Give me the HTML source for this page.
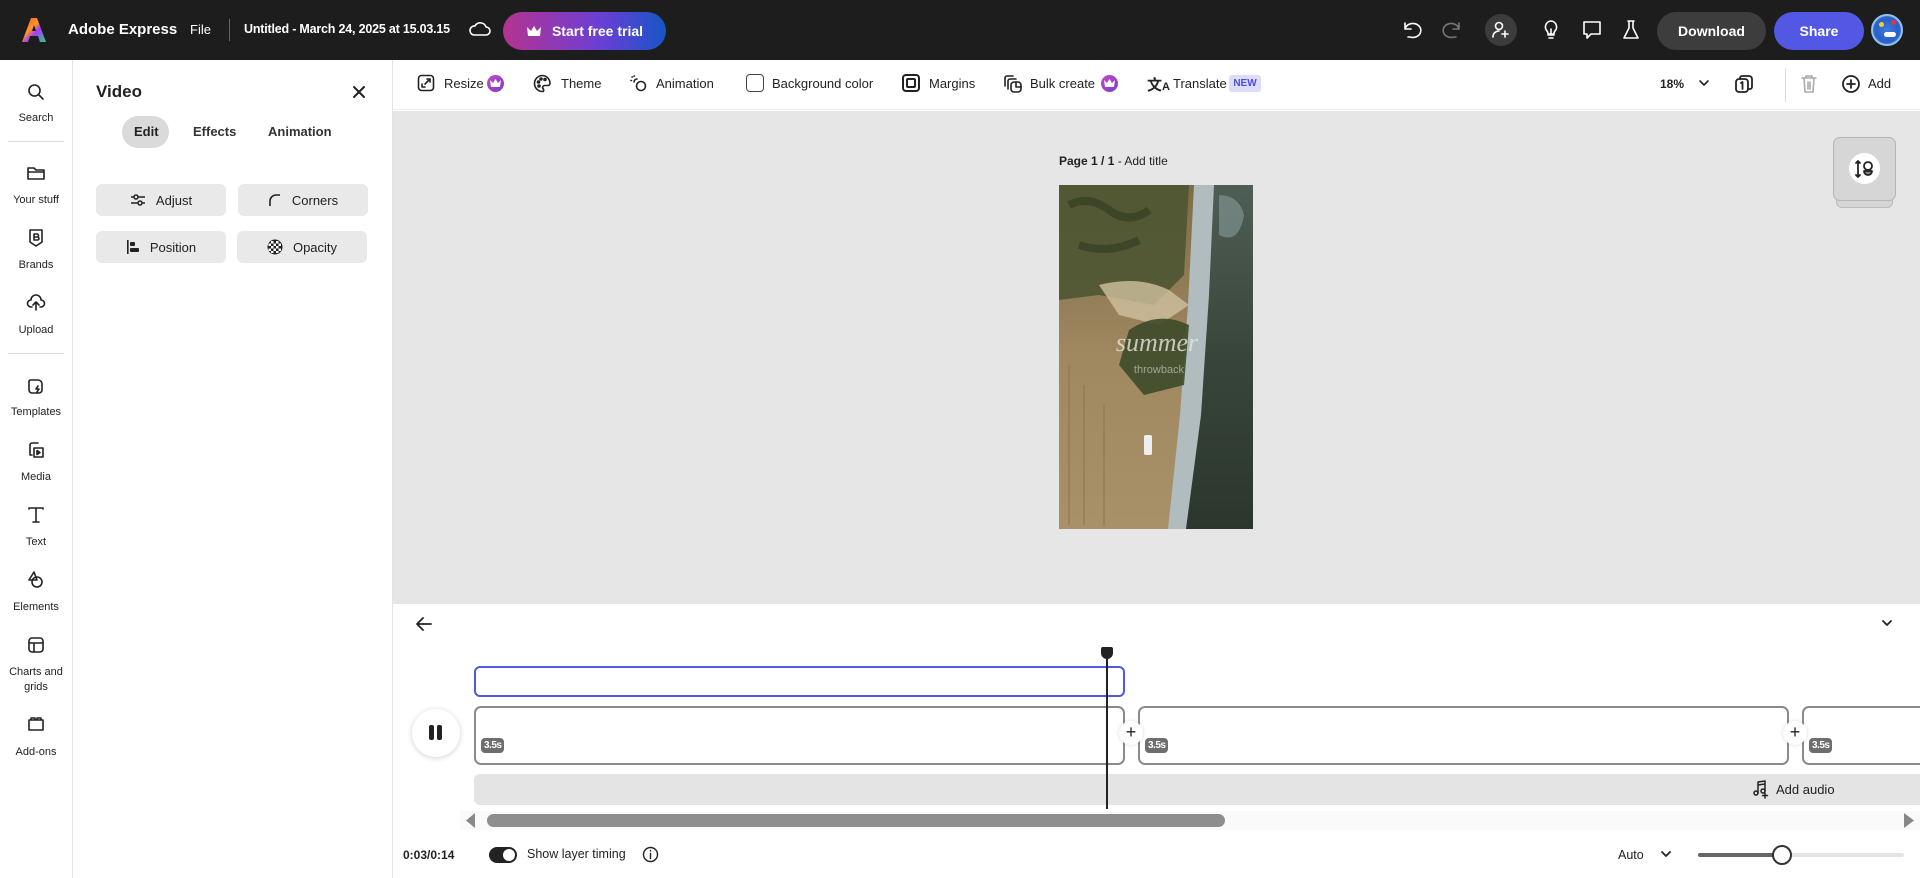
<!DOCTYPE html>
<html><head><meta charset="utf-8"><style>
*{box-sizing:border-box;margin:0;padding:0}
body{width:1920px;height:878px;overflow:hidden;font-family:"Liberation Sans",sans-serif;background:#fff;color:#222;position:relative}
.a{position:absolute}
.hdr{left:0;top:0;width:1920px;height:60px;background:#1d1d1d;color:#fff}
.t{font-size:13px;white-space:nowrap}
.ic{position:absolute;fill:none;stroke:#222;stroke-width:1.6;stroke-linecap:round;stroke-linejoin:round}
.w{stroke:#fff}
.rl{position:absolute;width:72px;text-align:center;font-size:11px;color:#222}
.btn{position:absolute;background:#e9e9e9;border-radius:6px;height:32px;font-size:13px;display:flex;align-items:center;justify-content:center;gap:10px}
.tb{position:absolute;top:76px;font-size:13px;color:#222;white-space:nowrap}
.badge{position:absolute;background:#6e6e6e;color:#fff;font-size:10px;border-radius:4px;padding:2px 3px;font-weight:bold;letter-spacing:-.5px}
.plus{position:absolute;width:24px;height:24px;border-radius:12px;background:#fff;font-size:18px;text-align:center;line-height:23px;box-shadow:0 0 4px rgba(0,0,0,.15)}
</style></head><body>
<div class="a hdr">
 <svg class="a" style="left:22px;top:17px" width="24" height="26" viewBox="0 0 24 26"><defs><linearGradient id="lg" x1="0" y1="0" x2="1" y2="1"><stop offset="0" stop-color="#ff3d3d"/><stop offset=".4" stop-color="#ff9a1f"/><stop offset=".6" stop-color="#a23bff"/><stop offset="1" stop-color="#2ed07a"/></linearGradient></defs><path d="M9 1h6l9 24h-6l-2-6h-8l-2 6H0z M10 14h4l-2-6z" fill="url(#lg)" fill-rule="evenodd"/></svg>
 <div class="a" style="left:68px;top:21px;font-size:15px;font-weight:bold">Adobe Express</div>
 <div class="a t" style="left:190px;top:22px">File</div>
 <div class="a" style="left:229px;top:19px;width:1px;height:22px;background:#666"></div>
 <div class="a t" style="left:244px;top:22px;font-weight:bold;font-size:12.5px;letter-spacing:-.2px">Untitled - March 24, 2025 at 15.03.15</div>
 <svg class="ic w" style="left:469px;top:19px" width="22" height="20" viewBox="0 0 22 20"><path d="M5 16h12a4 4 0 0 0 0-8 6 6 0 0 0-11-1 4.5 4.5 0 0 0-1 9z"/></svg>
 <div class="a" style="left:503px;top:12px;width:163px;height:38px;border-radius:19px;background:linear-gradient(90deg,#b5338f,#6a3fd6 60%,#1656c4);font-weight:bold;font-size:14px;display:flex;align-items:center;justify-content:center;gap:10px"><svg width="16" height="12" viewBox="0 0 16 12"><path d="M1 2l4 4 3-5 3 5 4-4-1 9H2z" fill="#fff"/></svg>Start free trial</div>
 <svg class="ic w" style="left:1401px;top:19px" width="22" height="22" viewBox="0 0 22 22"><path d="M4 4v6h6M4 10a8 7 0 1 1 5 8h-2"/></svg>
 <svg class="ic" style="left:1441px;top:19px;stroke:#777" width="22" height="22" viewBox="0 0 22 22"><path d="M18 4v6h-6M18 10a8 7 0 1 0-5 8h2"/></svg>
 <div class="a" style="left:1485px;top:14px;width:32px;height:32px;border-radius:16px;background:#3c3c3c"></div>
 <svg class="ic w" style="left:1491px;top:20px" width="20" height="20" viewBox="0 0 20 20"><circle cx="8" cy="6" r="3.5"/><path d="M2 17c0-4 3-6 6-6M14 11v6M11 14h6"/></svg>
 <svg class="ic w" style="left:1541px;top:19px" width="20" height="22" viewBox="0 0 20 22"><path d="M7 16h6M8 19h4M10 2a6 6 0 0 0-4 10c1 1 1 2 1 3h6c0-1 0-2 1-3a6 6 0 0 0-4-10zM10 15v-5"/></svg>
 <svg class="ic w" style="left:1581px;top:19px" width="22" height="22" viewBox="0 0 22 22"><path d="M3 3h16v12H10l-4 4v-4H3z"/></svg>
 <svg class="ic w" style="left:1621px;top:19px" width="20" height="22" viewBox="0 0 20 22"><path d="M7 2h6M8 2v7l-5 10h14L12 9V2"/></svg>
 <div class="a" style="left:1657px;top:12px;width:109px;height:38px;border-radius:19px;background:#3d3d3d;font-weight:bold;font-size:14px;text-align:center;line-height:38px">Download</div>
 <div class="a" style="left:1774px;top:12px;width:90px;height:38px;border-radius:19px;background:#5258e4;font-weight:bold;font-size:14px;text-align:center;line-height:38px">Share</div>
 <div class="a" style="left:1871px;top:14px;width:32px;height:32px;border-radius:16px;background:radial-gradient(circle at 50% 50%,#3a7be0,#2a5dc8 60%,#9ad 100%);border:2px solid #8bc4f0"></div>
 <div class="a" style="left:1879px;top:22px;width:5px;height:5px;border-radius:3px;background:#f5d020"></div>
 <div class="a" style="left:1891px;top:20px;width:5px;height:5px;border-radius:3px;background:#e33"></div>
 <div class="a" style="left:1884px;top:32px;width:12px;height:5px;border-radius:3px;background:#fff"></div>
</div>

<div class="a" style="left:72px;top:60px;width:1px;height:818px;background:#e4e4e4"></div>
<svg class="ic" style="left:26px;top:82px" width="20" height="20" viewBox="0 0 20 20"><circle cx="8.5" cy="8.5" r="5.5"/><path d="M13 13l4 4"/></svg>
<div class="rl" style="top:112px">Search</div>
<div class="a" style="left:8px;top:141px;width:56px;height:1px;background:#ddd"></div>
<svg class="ic" style="left:26px;top:164px" width="20" height="18" viewBox="0 0 20 18"><path d="M2 4h6l2 2h8v9H2zM2 8h16"/></svg>
<div class="rl" style="top:194px">Your stuff</div>
<svg class="ic" style="left:27px;top:228px" width="18" height="20" viewBox="0 0 18 20"><path d="M3 2h12v12l-6 4-6-4z"/><path d="M7 6h3a1.5 1.5 0 0 1 0 3H7zM7 9h3.5a1.5 1.5 0 0 1 0 3H7z"/></svg>
<div class="rl" style="top:259px">Brands</div>
<svg class="ic" style="left:26px;top:292px" width="20" height="20" viewBox="0 0 20 20"><path d="M6 15H5a3.5 3.5 0 0 1 0-7 5 5 0 0 1 10 0 3.5 3.5 0 0 1 0 7h-1M10 18v-8M7 13l3-3 3 3"/></svg>
<div class="rl" style="top:324px">Upload</div>
<div class="a" style="left:8px;top:353px;width:56px;height:1px;background:#ddd"></div>
<svg class="ic" style="left:26px;top:376px" width="20" height="20" viewBox="0 0 20 20"><path d="M4 4h8a4 4 0 0 1 4 4v6a3 3 0 0 1-3 3H6a3 3 0 0 1-3-3V5zM12 10l-2 3h3l-2 3"/></svg>
<div class="rl" style="top:406px">Templates</div>
<svg class="ic" style="left:26px;top:440px" width="20" height="20" viewBox="0 0 20 20"><path d="M6 15H4V5a2 2 0 0 1 2-2h6M8 8h9v9H8z"/><path d="M11 10.5l3 2-3 2z" fill="#222"/></svg>
<div class="rl" style="top:471px">Media</div>
<svg class="ic" style="left:26px;top:505px" width="20" height="20" viewBox="0 0 20 20"><path d="M3 4V3h14v1M10 3v14M7 17h6"/></svg>
<div class="rl" style="top:536px">Text</div>
<svg class="ic" style="left:26px;top:570px" width="20" height="20" viewBox="0 0 20 20"><path d="M8 2l-5 8h8z"/><circle cx="11" cy="12" r="5"/></svg>
<div class="rl" style="top:601px">Elements</div>
<svg class="ic" style="left:26px;top:635px" width="20" height="20" viewBox="0 0 20 20"><rect x="3" y="3" width="14" height="14" rx="3"/><path d="M3 8h14M8 8v9"/></svg>
<div class="rl" style="top:665px;line-height:15px">Charts and<br>grids</div>
<svg class="ic" style="left:26px;top:715px" width="20" height="18" viewBox="0 0 20 18"><path d="M3 5h14v10H3zM5 5V3h4v2M11 5V3h4v2"/></svg>
<div class="rl" style="top:746px">Add-ons</div>

<div class="a" style="left:392px;top:60px;width:1px;height:818px;background:#e4e4e4"></div>
<div class="a" style="left:96px;top:82px;font-size:17px;font-weight:bold">Video</div>
<svg class="ic" style="left:351px;top:84px;stroke-width:2" width="16" height="16" viewBox="0 0 16 16"><path d="M3 3l10 10M13 3L3 13"/></svg>
<div class="a" style="left:122px;top:116px;width:47px;height:32px;border-radius:16px;background:#dadada"></div>
<div class="a t" style="left:134px;top:124px;font-weight:bold">Edit</div>
<div class="a t" style="left:193px;top:124px;font-weight:bold;color:#333">Effects</div>
<div class="a t" style="left:268px;top:124px;font-weight:bold;color:#333">Animation</div>
<div class="btn" style="left:96px;top:184px;width:130px"><svg width="16" height="14" viewBox="0 0 16 14" fill="none" stroke="#222" stroke-width="1.5"><path d="M1 4h14M1 10h14"/><circle cx="6" cy="4" r="2" fill="#e9e9e9"/><circle cx="10" cy="10" r="2" fill="#e9e9e9"/></svg>Adjust</div>
<div class="btn" style="left:238px;top:184px;width:130px"><svg width="14" height="14" viewBox="0 0 14 14" fill="none" stroke="#222" stroke-width="1.6"><path d="M2 13V8a6 6 0 0 1 6-6h4"/></svg>Corners</div>
<div class="btn" style="left:96px;top:231px;width:130px"><svg width="14" height="14" viewBox="0 0 14 14"><rect x="1" y="0" width="1.6" height="14" fill="#222"/><rect x="4" y="2" width="5" height="4" rx="1" fill="#222"/><rect x="4" y="8" width="9" height="4" rx="1" fill="#222"/></svg>Position</div>
<div class="btn" style="left:237px;top:231px;width:130px"><svg width="16" height="16" viewBox="0 0 16 16"><circle cx="8" cy="8" r="7.5" fill="#222"/><g fill="#fff"><rect x="4" y="2" width="2.5" height="2.5"/><rect x="9" y="2" width="2.5" height="2.5"/><rect x="6.5" y="4.5" width="2.5" height="2.5"/><rect x="11.5" y="4.5" width="2.5" height="2.5"/><rect x="1.5" y="4.5" width="2.5" height="2.5"/><rect x="4" y="7" width="2.5" height="2.5"/><rect x="9" y="7" width="2.5" height="2.5"/><rect x="6.5" y="9.5" width="2.5" height="2.5"/><rect x="1.5" y="9.5" width="2.5" height="2.5"/><rect x="11.5" y="9.5" width="2.5" height="2.5"/><rect x="4" y="12" width="2.5" height="2"/><rect x="9" y="12" width="2.5" height="2"/></g></svg>Opacity</div>

<div class="a" style="left:393px;top:60px;width:1527px;height:50px;background:#fff;border-bottom:1px solid #eee"></div>
<svg class="ic" style="left:417px;top:74px" width="18" height="18" viewBox="0 0 18 18"><rect x="1.5" y="1.5" width="15" height="15" rx="3"/><path d="M8 10l5-5M10 5h3v3M5 10v3h3" /></svg>
<div class="tb" style="left:444px">Resize</div>
<div class="a" style="left:487px;top:75px;width:17px;height:17px;border-radius:9px;background:linear-gradient(135deg,#c64bc1,#7a3bd0)"></div>
<svg class="a" style="left:490px;top:79px" width="11" height="9" viewBox="0 0 11 9"><path d="M0 1l3 3 2.5-4 2.5 4 3-3-1 7H1z" fill="#fff"/></svg>
<svg class="ic" style="left:533px;top:74px" width="19" height="19" viewBox="0 0 19 19"><path d="M9.5 1.5a8 8 0 1 0 0 16c1.5 0 1.5-2 .5-3s0-3 2-3h3a2 2 0 0 0 2-2 8 8 0 0 0-7.5-8z"/><circle cx="5.5" cy="8" r="1" fill="#222"/><circle cx="8" cy="5" r="1" fill="#222"/><circle cx="12" cy="5.5" r="1" fill="#222"/><circle cx="6" cy="12" r="1" fill="#222"/></svg>
<div class="tb" style="left:561px">Theme</div>
<svg class="ic" style="left:629px;top:74px" width="19" height="19" viewBox="0 0 19 19"><circle cx="12" cy="12" r="4.5"/><path d="M3 3h.5M2 6.5h.5M5 2h.5M5 8a3 3 0 0 1 3-3"/></svg>
<div class="tb" style="left:656px">Animation</div>
<div class="a" style="left:746px;top:74px;width:18px;height:18px;border:1.6px solid #444;border-radius:4px"></div>
<div class="tb" style="left:772px">Background color</div>
<div class="a" style="left:902px;top:74px;width:18px;height:18px;border:2px solid #222;border-radius:4px"></div>
<div class="a" style="left:906px;top:78px;width:10px;height:10px;border:2px solid #222;border-radius:2px"></div>
<div class="tb" style="left:929px">Margins</div>
<svg class="ic" style="left:1003px;top:74px" width="20" height="20" viewBox="0 0 20 20"><path d="M2 12V4a2 2 0 0 1 2-2h6M5 15V7a2 2 0 0 1 2-2h6"/><rect x="8" y="8" width="10" height="10" rx="3"/><path d="M13 8v5h5"/></svg>
<div class="tb" style="left:1030px">Bulk create</div>
<div class="a" style="left:1101px;top:75px;width:17px;height:17px;border-radius:9px;background:linear-gradient(135deg,#c64bc1,#7a3bd0)"></div>
<svg class="a" style="left:1104px;top:79px" width="11" height="9" viewBox="0 0 11 9"><path d="M0 1l3 3 2.5-4 2.5 4 3-3-1 7H1z" fill="#fff"/></svg>
<div class="tb" style="left:1147px;top:74px;font-size:15px;font-weight:bold;font-family:'Liberation Sans','Noto Sans CJK SC',sans-serif">文<span style="font-size:11px">A</span></div>
<div class="tb" style="left:1173px">Translate</div>
<div class="a" style="left:1229px;top:75px;width:32px;height:17px;border-radius:3px;background:#dcdcfa;color:#4b4fd6;font-size:10px;font-weight:bold;text-align:center;line-height:17px">NEW</div>
<div class="tb" style="left:1660px;font-weight:bold;font-size:12px;top:77px">18%</div>
<svg class="ic" style="left:1698px;top:78px" width="12" height="10" viewBox="0 0 12 10"><path d="M2 3l4 4 4-4"/></svg>
<svg class="ic" style="left:1734px;top:74px;stroke-width:1.8" width="20" height="20" viewBox="0 0 20 20"><rect x="2" y="5" width="12" height="13" rx="3"/><path d="M6 5V4a2 2 0 0 1 2-2h7a3 3 0 0 1 3 3v8a2 2 0 0 1-2 2h-2M7 9l1.5-1v7"/></svg>
<div class="a" style="left:1785px;top:68px;width:1px;height:34px;background:#ddd"></div>
<svg class="ic" style="left:1800px;top:74px;stroke:#aaa" width="18" height="20" viewBox="0 0 18 20"><path d="M2 4h14M6 4V2h6v2M4 4l1 14h8l1-14M8 8v7M10 8v7"/></svg>
<svg class="ic" style="left:1841px;top:74px;stroke-width:1.8" width="20" height="20" viewBox="0 0 20 20"><circle cx="10" cy="10" r="8"/><path d="M10 6v8M6 10h8"/></svg>
<div class="tb" style="left:1868px">Add</div>

<div class="a" style="left:393px;top:111px;width:1527px;height:493px;background:#e6e6e6"></div>
<div class="a t" style="left:1059px;top:154px;font-size:12px"><b>Page 1 / 1</b> - Add title</div>
<svg class="a" style="left:1059px;top:185px" width="194" height="344" viewBox="0 0 194 344" preserveAspectRatio="none">
 <defs><linearGradient id="fld" x1="0" y1="0" x2="0" y2="1"><stop offset="0" stop-color="#7d6b48"/><stop offset=".5" stop-color="#a08860"/><stop offset="1" stop-color="#a89068"/></linearGradient>
 <linearGradient id="rt" x1="0" y1="0" x2="0" y2="1"><stop offset="0" stop-color="#4f5e55"/><stop offset=".5" stop-color="#38453a"/><stop offset="1" stop-color="#2b372c"/></linearGradient></defs>
 <rect width="194" height="344" fill="url(#fld)"/>
 <path d="M150 0H194V344H125L140 240 148 140z" fill="url(#rt)"/>
 <path d="M160 10q20 0 25 20q-5 30-25 20z" fill="#7f918f" opacity=".7"/>
 <path d="M135 0h20l-5 110 -8 120 -15 114h-18l12-114 8-110z" fill="#b0bcbd"/>
 <path d="M0 0h130l-5 90-30 30-55-10-40 5z" fill="#4a5330" opacity=".85"/>
 <path d="M10 20q20-10 40 5t40 0M20 60q30 10 60-5" stroke="#2f3a20" stroke-width="8" fill="none" opacity=".6"/>
 <path d="M40 100q40-10 70 5l20 15-30 20-40-10z" fill="#cfc0a0" opacity=".8"/>
 <path d="M70 145q30-20 60-5l-5 60-40 10-25-30z" fill="#3d4a2a" opacity=".9"/>
 <path d="M10 180v160M25 200v140M45 220v120" stroke="#8a7550" stroke-width="2" opacity=".5"/>
 <rect x="85" y="250" width="8" height="20" rx="2" fill="#eee"/>
 <text x="98" y="166" text-anchor="middle" font-family="Liberation Serif,serif" font-style="italic" font-size="26" fill="#e8e4dc" opacity=".8">summer</text>
 <text x="100" y="188" text-anchor="middle" font-family="Liberation Sans,sans-serif" font-size="11" fill="#ddd" opacity=".6">throwback</text>
</svg>
<div class="a" style="left:1836px;top:146px;width:57px;height:62px;border-radius:6px;background:#d6d6d6;border:1.5px solid #bbb"></div>
<div class="a" style="left:1833px;top:137px;width:63px;height:64px;border-radius:7px;background:#d6d6d6;border:1.5px solid #b5b5b5"></div>
<div class="a" style="left:1849px;top:153px;width:31px;height:31px;border-radius:16px;background:#fff"></div>
<svg class="ic" style="left:1854px;top:158px;stroke-width:1.8" width="22" height="22" viewBox="0 0 22 22"><path d="M4 3v16M2 5l2-2 2 2M2 17l2 2 2-2"/><circle cx="14" cy="8" r="4"/><path d="M10 13a4 4 0 0 0 8 0z" fill="#888"/></svg>

<svg class="ic" style="left:415px;top:616px;stroke-width:1.8" width="18" height="16" viewBox="0 0 18 16"><path d="M16 8H2M8 2L2 8l6 6"/></svg>
<svg class="ic" style="left:1881px;top:618px;stroke-width:1.8" width="12" height="10" viewBox="0 0 12 10"><path d="M2 3l4 4 4-4"/></svg>
<div class="a" style="left:474px;top:666px;width:651px;height:31px;border:2px solid #5258e4;border-radius:6px"></div>
<div class="a" style="left:474px;top:706px;width:651px;height:59px;border:2px solid #8a8a8a;border-radius:7px"></div>
<div class="a" style="left:1138px;top:706px;width:651px;height:59px;border:2px solid #8a8a8a;border-radius:7px"></div>
<div class="a" style="left:1802px;top:706px;width:140px;height:59px;border:2px solid #8a8a8a;border-radius:7px"></div>
<div class="badge" style="left:481px;top:738px">3.5s</div>
<div class="badge" style="left:1145px;top:738px">3.5s</div>
<div class="badge" style="left:1809px;top:738px">3.5s</div>
<div class="plus" style="left:1119px;top:721px">+</div>
<div class="plus" style="left:1783px;top:721px">+</div>
<div class="a" style="left:412px;top:709px;width:48px;height:48px;border-radius:24px;background:#fff;box-shadow:0 1px 6px rgba(0,0,0,.18)"></div>
<div class="a" style="left:429px;top:725px;width:5px;height:15px;border-radius:2px;background:#222"></div>
<div class="a" style="left:437px;top:725px;width:5px;height:15px;border-radius:2px;background:#222"></div>
<div class="a" style="left:474px;top:774px;width:1446px;height:31px;background:#e4e4e4;border-radius:6px 0 0 6px"></div>
<svg class="ic" style="left:1752px;top:779px;stroke-width:1.5" width="18" height="20" viewBox="0 0 18 20"><circle cx="4" cy="14" r="2"/><circle cx="11" cy="12" r="2"/><path d="M6 14V3l7-1v10M6 6l7-1M13 14v5M10.5 16.5h5"/></svg>
<div class="a t" style="left:1776px;top:782px">Add audio</div>
<div class="a" style="left:460px;top:811px;width:1460px;height:19px;background:#fafafa"></div>
<div class="a" style="left:487px;top:814px;width:738px;height:13px;border-radius:7px;background:#8e8e8e"></div>
<svg class="a" style="left:466px;top:813px" width="10" height="15"><path d="M9 0v15L0 7.5z" fill="#888"/></svg>
<svg class="a" style="left:1904px;top:813px" width="10" height="15"><path d="M0 0v15l10-7.5z" fill="#888"/></svg>
<div class="a" style="left:1106px;top:655px;width:2px;height:154px;background:#222"></div>
<div class="a" style="left:1101px;top:647px;width:12px;height:12px;border-radius:2px 2px 6px 6px;background:#222"></div>
<div class="a t" style="left:403px;top:848px;font-size:12px;font-weight:bold">0:03/0:14</div>
<div class="a" style="left:489px;top:847px;width:28px;height:16px;border-radius:8px;background:#222"></div>
<div class="a" style="left:503px;top:849px;width:12px;height:12px;border-radius:6px;background:#fff"></div>
<div class="a t" style="left:527px;top:847px;font-size:12.5px">Show layer timing</div>
<svg class="ic" style="left:642px;top:846px;stroke-width:1.4" width="17" height="17" viewBox="0 0 17 17"><circle cx="8.5" cy="8.5" r="7"/><path d="M8.5 7.5v5M8.5 4.5v.5"/></svg>
<div class="a t" style="left:1618px;top:848px;font-size:12.5px">Auto</div>
<svg class="ic" style="left:1660px;top:849px;stroke-width:1.8" width="12" height="10" viewBox="0 0 12 10"><path d="M2 3l4 4 4-4"/></svg>
<div class="a" style="left:1698px;top:853px;width:206px;height:4px;border-radius:2px;background:#e4e4e4"></div>
<div class="a" style="left:1698px;top:853px;width:84px;height:4px;border-radius:2px;background:#666"></div>
<div class="a" style="left:1772px;top:845px;width:20px;height:20px;border-radius:10px;background:#fff;border:2px solid #333"></div>
</body></html>
